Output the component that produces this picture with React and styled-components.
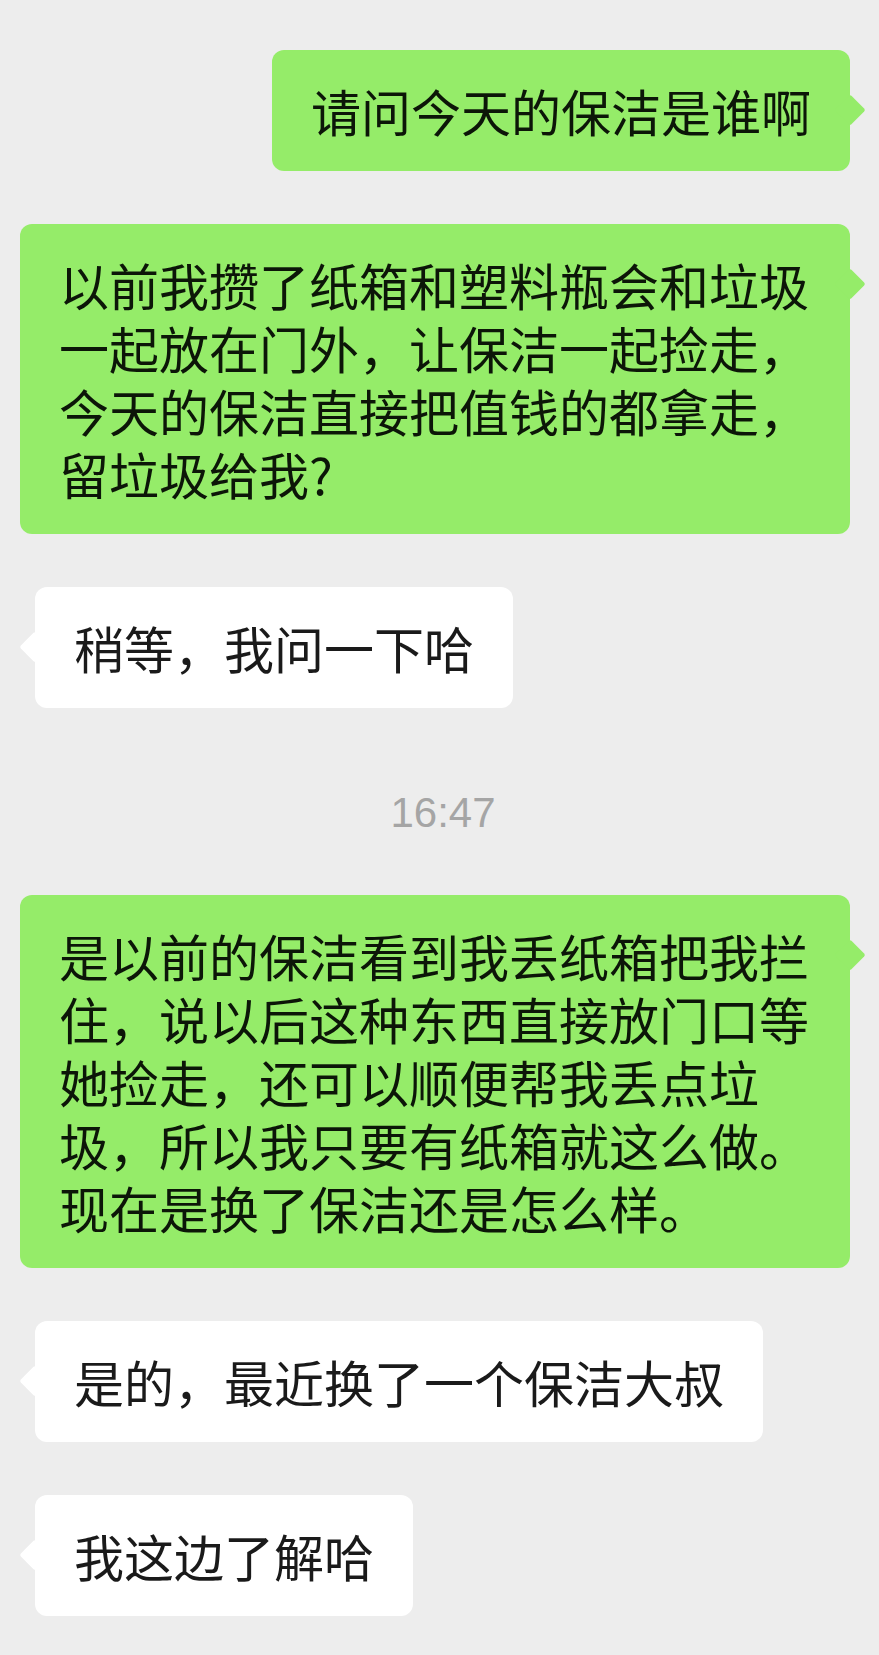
import React from 'react';
import styled, { createGlobalStyle } from 'styled-components';

const GlobalStyle = createGlobalStyle`
  html, body {
    margin: 0;
    padding: 0;
    background: #ededed;
  }
  body {
    font-family: "Noto Sans CJK SC", "Noto Sans", sans-serif;
  }
`;

// chat list
const ChatContainer = styled.div`
  display: flex;
  flex-direction: column;
  gap: 53px;
  padding: 50px 29px 41px 20px;
  min-height: 1655px;
  box-sizing: border-box;
  background: #ededed;
`;

const Row = styled.div`
  display: flex;
  justify-content: ${props => (props.$out ? 'flex-end' : 'flex-start')};
  padding-left: ${props => (props.$out ? '0' : '15px')};
`;

const Bubble = styled.div`
  position: relative;
  max-width: 100%;
  box-sizing: border-box;
  padding: 29px 39px;
  border-radius: 12px;
  background: ${props => (props.$out ? '#95ec69' : '#ffffff')};
  color: ${props => (props.$out ? '#0c1608' : '#1a1a1a')};
  font-size: 50px;
  line-height: 63px;
  word-break: break-all;

  /* little pointer next to the first line */
  &::after {
    content: '';
    position: absolute;
    top: 49px;
    ${props => (props.$out ? 'right: -11px;' : 'left: -11px;')}
    width: 22px;
    height: 22px;
    border-radius: 2px;
    background: inherit;
    transform: rotate(45deg);
  }
`;

const TimeStamp = styled.div`
  padding: 31px 0 8px 16px;
  text-align: center;
  font-family: "Liberation Sans", Arial, sans-serif;
  font-size: 42px;
  line-height: 42px;
  color: #a5a5a5;
`;

const messages = [
  { id: 1, out: true, text: '请问今天的保洁是谁啊' },
  {
    id: 2,
    out: true,
    text: '以前我攒了纸箱和塑料瓶会和垃圾一起放在门外，让保洁一起捡走，今天的保洁直接把值钱的都拿走，留垃圾给我?',
  },
  { id: 3, out: false, text: '稍等，我问一下哈' },
  { id: 4, time: '16:47' },
  {
    id: 5,
    out: true,
    text: '是以前的保洁看到我丢纸箱把我拦住，说以后这种东西直接放门口等她捡走，还可以顺便帮我丢点垃圾，所以我只要有纸箱就这么做。现在是换了保洁还是怎么样。',
  },
  { id: 6, out: false, text: '是的，最近换了一个保洁大叔' },
  { id: 7, out: false, text: '我这边了解哈' },
];

const App = () => {
  return (
    <>
      <GlobalStyle />
      <ChatContainer>
        {messages.map((msg) =>
          msg.time ? (
            <TimeStamp key={msg.id}>{msg.time}</TimeStamp>
          ) : (
            <Row key={msg.id} $out={msg.out}>
              <Bubble $out={msg.out}>{msg.text}</Bubble>
            </Row>
          )
        )}
      </ChatContainer>
    </>
  );
};

export default App;
